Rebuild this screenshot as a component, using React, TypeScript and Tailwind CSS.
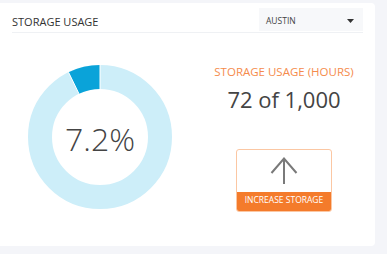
import React from "react";

export default function App() {
  const cx = 73;
  const cy = 73;
  const r = 60;
  const pct = 7.2;
  const ang = (pct / 100) * 2 * Math.PI;
  const ex = cx - r * Math.sin(ang);
  const ey = cy - r * Math.cos(ang);
  const rin = 48;
  const rout = 72;
  return (
    <div
      className="w-[387px] h-[254px] bg-[#f4f5f9] pt-[3px] overflow-hidden"
      style={{ fontFamily: "'Open Sans', 'Liberation Sans', sans-serif" }}
    >
      <div className="w-[375px] h-[243px] bg-white rounded-r-[4px] flex flex-col">
        <div className="mx-3 flex justify-between items-start border-b border-[#eff1f4] pt-[5px] pb-px">
          <div className="mt-[6px] text-[11px] leading-[16px] text-[#333]">STORAGE USAGE</div>
          <div className="w-[104px] h-[23px] bg-[#f7f8fa] flex justify-between items-start pl-[7px] pr-[9px] pt-[8px]">
            <span className="text-[8.5px] leading-[10px] text-[#444]">AUSTIN</span>
            <svg width="7" height="4" viewBox="0 0 7 4" className="mt-[3px]">
              <path d="M0 0 L7 0 L3.5 4 Z" fill="#333" />
            </svg>
          </div>
        </div>
        <div className="flex flex-1">
          <div className="w-[200px]">
            <svg width="146" height="146" viewBox="0 0 146 146" className="ml-[27px] mt-[31px]">
              <circle cx={cx} cy={cy} r={r} fill="none" stroke="#cdeef9" strokeWidth="24" />
              <path
                d={`M${cx} ${cy - r} A${r} ${r} 0 0 0 ${ex} ${ey}`}
                fill="none"
                stroke="#0aa3d9"
                strokeWidth="24"
              />
              <line x1={cx} y1={cy - rin} x2={cx} y2={cy - rout} stroke="#fff" strokeWidth="1" />
              <line
                x1={cx - rin * Math.sin(ang)}
                y1={cy - rin * Math.cos(ang)}
                x2={cx - rout * Math.sin(ang)}
                y2={cy - rout * Math.cos(ang)}
                stroke="#fff"
                strokeWidth="1"
              />
              <text
                x={cx}
                y={cy + 14}
                textAnchor="middle"
                fontSize="32"
                fontWeight="300"
                fill="#444"
                fontFamily="'Open Sans', 'Liberation Sans', sans-serif"
              >
                7.2%
              </text>
            </svg>
          </div>
          <div className="w-[168px] flex flex-col items-center">
            <div className="mt-[31px] text-[11.5px] leading-[16px] text-[#f58b4c] whitespace-nowrap">
              STORAGE USAGE (HOURS)
            </div>
            <div className="mt-[4px] text-[22px] leading-[30px] text-[#444] whitespace-nowrap">72 of 1,000</div>
            <div className="mt-[35px] w-[96px] h-[63px] border border-[#fbc7a3] rounded-[3px] flex flex-col overflow-hidden">
              <div className="flex-1 flex items-center justify-center">
                <svg width="30" height="28" viewBox="0 0 30 28">
                  <path
                    d="M15 27 L15 1.5 M2.5 16 L15 1.5 L27.5 16"
                    fill="none"
                    stroke="#7a7a7a"
                    strokeWidth="2"
                  />
                </svg>
              </div>
              <div className="h-[19px] bg-[#f47b2b] flex items-center justify-center pb-[3px] text-white text-[8.5px] leading-[10px] whitespace-nowrap">
                INCREASE STORAGE
              </div>
            </div>
          </div>
        </div>
      </div>
    </div>
  );
}
